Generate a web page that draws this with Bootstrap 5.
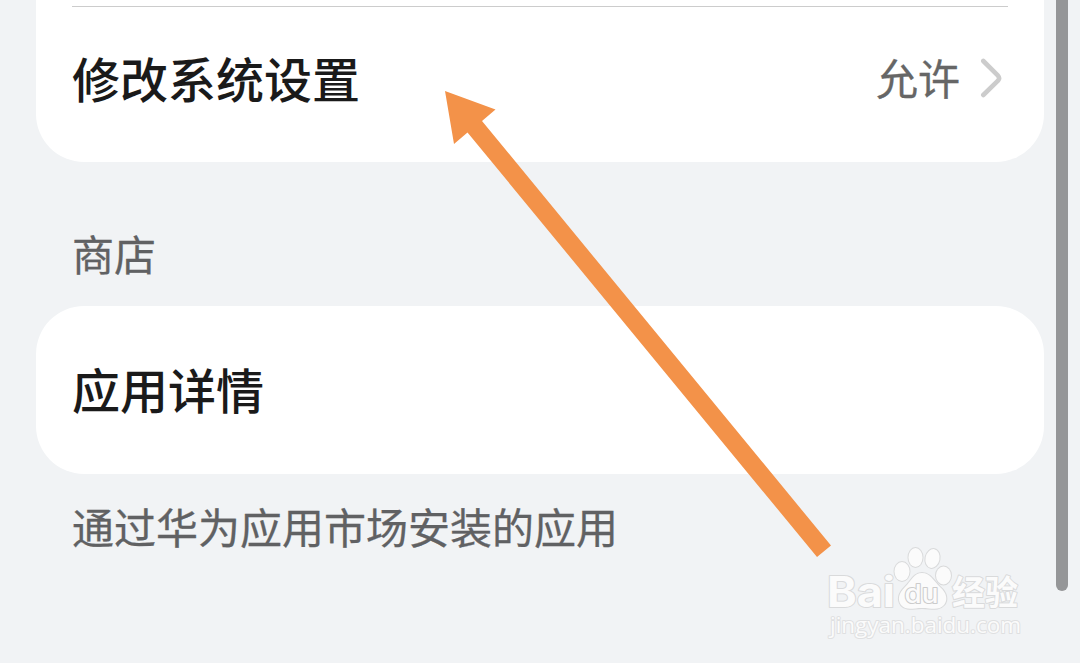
<!DOCTYPE html>
<html lang="zh-CN">
<head>
  <meta charset="UTF-8">
  <meta name="viewport" content="width=device-width, initial-scale=1">
  <title>应用信息</title>
  <link href="https://cdn.jsdelivr.net/npm/bootstrap@5.3.0/dist/css/bootstrap.min.css" rel="stylesheet">
  <style>
    body {
      height: 663px;
      background: #f1f3f5;
      font-family: "Noto Sans CJK SC", sans-serif;
      overflow: hidden;
    }
    .settings-page { padding: 0 36px; }
    .settings-card { padding: 0 36px; border-radius: 48px; }
    .settings-card.first { height: 162px; padding-top: 6px; border-radius: 0 0 48px 48px; }
    .divider { height: 1px; background: #ccc; }
    .first .settings-row { height: 144px; }
    .settings-card.detail { height: 168px; }
    .detail .settings-row { height: 168px; }
    .row-title { padding-bottom: 5px; font-size: 48px; line-height: 72px; font-weight: 500; color: #1a1a1a; }
    .detail .row-title { padding-bottom: 4px; }
    .row-value { padding-bottom: 4px; font-size: 42px; line-height: 60px; color: #666; -webkit-text-stroke: .3px #666; }
    .caption { padding: 0 36px; font-size: 42px; line-height: 60px; color: #606163; -webkit-text-stroke: .3px #606163; }
    .group-caption { height: 144px; padding-top: 61px; }
    .note-caption { padding-top: 22px; }
    .chevron { margin: 0 6px 0 18px; }
    .scroll-thumb { left: 1056px; width: 12px; height: 591px; background: #959698; border-radius: 0 0 6px 6px; }
  </style>
</head>
<body class="position-relative">

  <main class="settings-page">
    <section class="settings-card first bg-white">
      <div class="divider"></div>
      <div class="settings-row d-flex align-items-center justify-content-between">
        <span class="row-title">修改系统设置</span>
        <div class="d-flex align-items-center">
          <span class="row-value">允许</span>
          <svg class="chevron" width="24" height="42" viewBox="0 0 24 42" fill="none" stroke="#ccc" stroke-width="4.6" stroke-linecap="round" stroke-linejoin="round">
            <path d="M5.3 3 L20 17.7 Q22.2 20.2 20 22.7 L5.3 37"/>
          </svg>
        </div>
      </div>
    </section>

    <div class="caption group-caption">商店</div>

    <section class="settings-card detail bg-white">
      <div class="settings-row d-flex align-items-center">
        <span class="row-title">应用详情</span>
      </div>
    </section>

    <div class="caption note-caption">通过华为应用市场安装的应用</div>
  </main>

  <!-- Scrollbar -->
  <div class="scroll-thumb position-absolute top-0"></div>

  <!-- Arrow and watermark over the page -->
  <svg class="position-absolute top-0 start-0" width="1080" height="663" viewBox="0 0 1080 663">
    <polygon fill="#f39249" points="445,91 495.5,109.5 482,121 831,545.5 817,557 467.5,132.5 454,144"/>
    <g fill="#fbfbfb" stroke="#d9dadb" stroke-width="2" paint-order="stroke" stroke-linejoin="round">
      <text x="827" y="607" font-family="Inter, sans-serif" font-weight="700" font-size="42" textLength="68" lengthAdjust="spacingAndGlyphs">Bai</text>
      <ellipse cx="902" cy="571.5" rx="7.5" ry="9.5"/>
      <ellipse cx="915.5" cy="557.5" rx="7" ry="9.5"/>
      <ellipse cx="932.5" cy="558.5" rx="7" ry="9.5" transform="rotate(12 932.5 558.5)"/>
      <ellipse cx="943.5" cy="575.5" rx="7.5" ry="9"/>
      <path d="M922 573 C930 573 934 581 940 587 C947 593 948 600 944 605 C939 611 931 608 922 608 C913 608 906 611 901 605 C897 599 899 593 905 587 C911 581 914 573 922 573Z"/>
      <text x="904.5" y="603" font-family="Inter, sans-serif" font-weight="500" font-size="26" stroke="#ccc" textLength="34" lengthAdjust="spacingAndGlyphs">du</text>
      <text x="952" y="605" font-family="Noto Sans CJK SC, sans-serif" font-weight="700" font-size="34" textLength="66" lengthAdjust="spacingAndGlyphs">经验</text>
      <text x="830" y="633" font-family="Open Sans, sans-serif" font-size="22" stroke="#dfe0e1" textLength="191" lengthAdjust="spacingAndGlyphs">jingyan.baidu.com</text>
    </g>
  </svg>

  <script src="https://cdn.jsdelivr.net/npm/bootstrap@5.3.0/dist/js/bootstrap.bundle.min.js"></script>
</body>
</html>
